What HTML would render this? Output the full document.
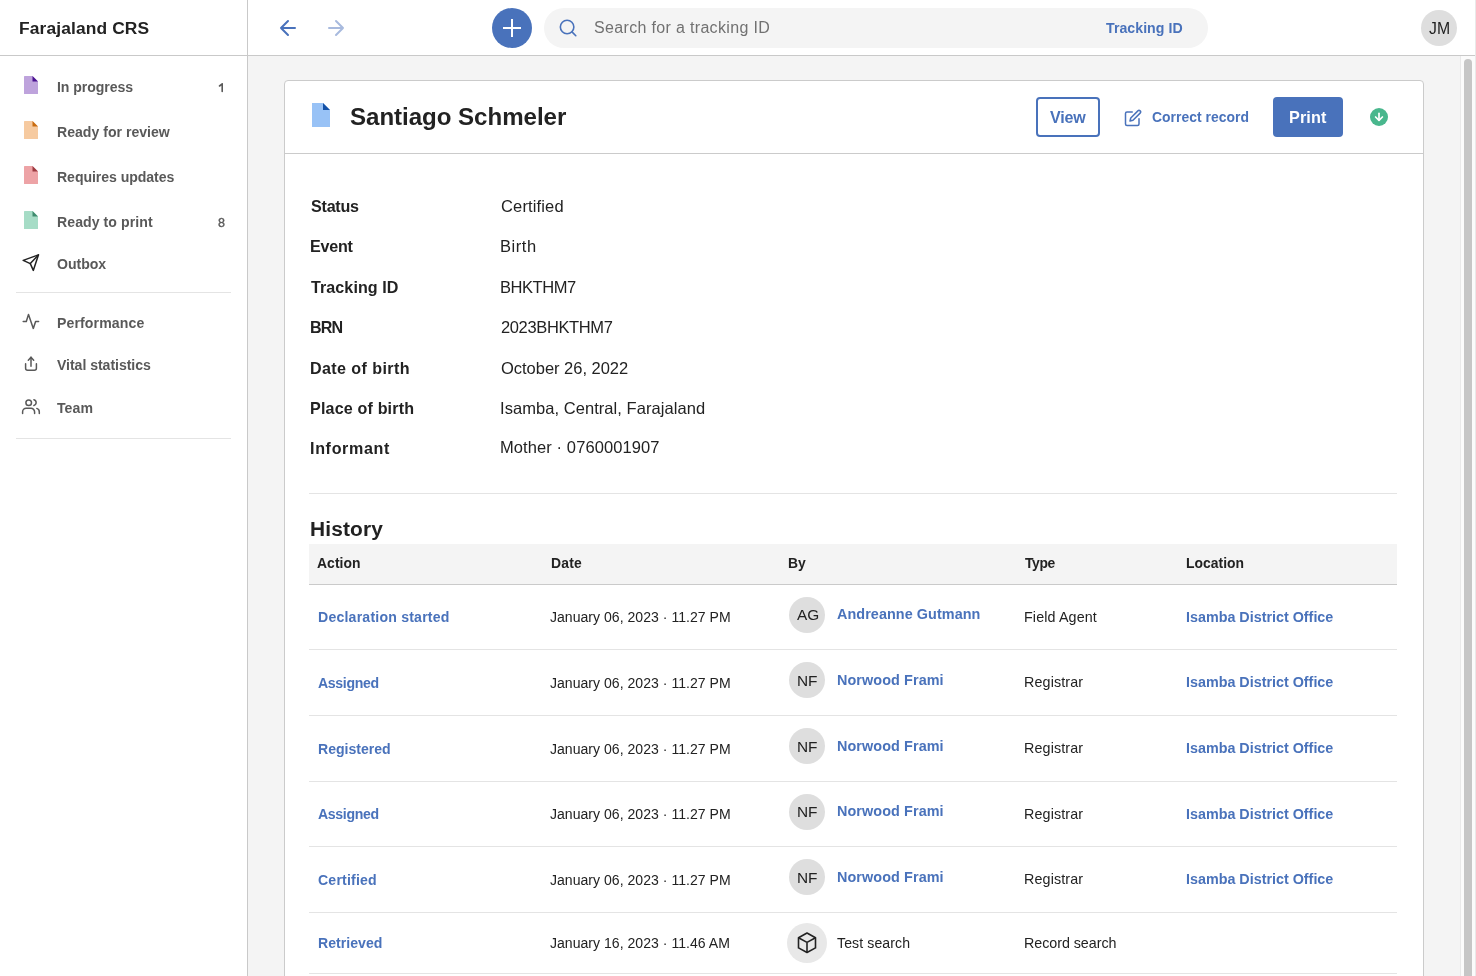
<!DOCTYPE html>
<html><head><meta charset="utf-8"><title>Farajaland CRS</title>
<style>
html,body{margin:0;padding:0;}
body{width:1476px;height:976px;overflow:hidden;position:relative;background:#fff;font-family:"Liberation Sans",sans-serif;}
.t{position:absolute;white-space:nowrap;line-height:1;will-change:transform;}
svg{display:block}
</style></head><body><div style="position:absolute;left:0;top:0;width:1476px;height:976px;overflow:hidden">
<div style="position:absolute;left:248px;top:56px;width:1212px;height:920px;background:#f4f4f4"></div>
<div style="position:absolute;left:284px;top:80px;width:1140px;height:960px;background:#fff;border:1px solid #cbcbcb;border-radius:4px;box-sizing:border-box"></div>
<div style="position:absolute;left:285px;top:153px;width:1138px;height:1px;background:#cbcbcb"></div>
<div style="position:absolute;left:0px;top:0px;width:1476px;height:55px;background:#fff"></div>
<div style="position:absolute;left:0px;top:55px;width:1475px;height:1px;background:#c9c9c9"></div>
<div style="position:absolute;left:0px;top:56px;width:247px;height:920px;background:#fff"></div>
<div style="position:absolute;left:247px;top:0px;width:1px;height:976px;background:#c9c9c9"></div>
<div style="position:absolute;left:1460px;top:56px;width:1px;height:920px;background:#e9e9e9"></div>
<div style="position:absolute;left:1461px;top:56px;width:14px;height:920px;background:#fbfbfb"></div>
<div style="position:absolute;left:1475px;top:0px;width:1px;height:976px;background:#e9e9e9"></div>
<div style="position:absolute;left:1464px;top:59px;width:8px;height:930px;background:#c6c6c6;border-radius:4px"></div>
<div class="t" style="left:19.20px;top:19.91px;font-size:17.4px;font-weight:700;color:#222222;letter-spacing:0.120px;">Farajaland CRS</div>
<svg style="position:absolute;left:24px;top:76px" width="14" height="18" viewBox="0 0 14 18" fill="none"><path d="M0.6 0H8.5L14 5.5V17.4Q14 18 13.4 18H0.6Q0 18 0 17.4V0.6Q0 0 0.6 0Z" fill="#bea3dc"/><path d="M8.5 0L14 5.5H8.5Z" fill="#4b1390"/></svg>
<div class="t" style="left:56.70px;top:80.02px;font-size:14.1px;font-weight:700;color:#595959;letter-spacing:-0.061px;">In progress</div>
<svg style="position:absolute;left:24px;top:121px" width="14" height="18" viewBox="0 0 14 18" fill="none"><path d="M0.6 0H8.5L14 5.5V17.4Q14 18 13.4 18H0.6Q0 18 0 17.4V0.6Q0 0 0.6 0Z" fill="#f6caa0"/><path d="M8.5 0L14 5.5H8.5Z" fill="#c96c10"/></svg>
<div class="t" style="left:56.70px;top:125.02px;font-size:14.1px;font-weight:700;color:#595959;">Ready for review</div>
<svg style="position:absolute;left:24px;top:166px" width="14" height="18" viewBox="0 0 14 18" fill="none"><path d="M0.6 0H8.5L14 5.5V17.4Q14 18 13.4 18H0.6Q0 18 0 17.4V0.6Q0 0 0.6 0Z" fill="#eda3a6"/><path d="M8.5 0L14 5.5H8.5Z" fill="#9c3b40"/></svg>
<div class="t" style="left:56.70px;top:170.01px;font-size:14.1px;font-weight:700;color:#595959;letter-spacing:-0.062px;">Requires updates</div>
<svg style="position:absolute;left:24px;top:211px" width="14" height="18" viewBox="0 0 14 18" fill="none"><path d="M0.6 0H8.5L14 5.5V17.4Q14 18 13.4 18H0.6Q0 18 0 17.4V0.6Q0 0 0.6 0Z" fill="#a6dcc6"/><path d="M8.5 0L14 5.5H8.5Z" fill="#3e8b6e"/></svg>
<div class="t" style="left:56.70px;top:215.01px;font-size:14.1px;font-weight:700;color:#595959;letter-spacing:0.065px;">Ready to print</div>
<svg style="position:absolute;left:214px;top:78px" width="14" height="18" viewBox="0 0 14 18" fill="none"><path d="M8.2 5.9V13.4M8.2 5.9L5.5 8.0" stroke="#595959" stroke-width="1.6" stroke-linecap="round" stroke-linejoin="round"/></svg>
<div class="t" style="left:218.00px;top:217.38px;font-size:12.5px;font-weight:400;color:#595959;-webkit-text-stroke:0.35px #595959">8</div>
<svg style="position:absolute;left:18px;top:250px" width="26" height="26" viewBox="0 0 26 26" fill="none"><g stroke="#222222" stroke-width="1.5" stroke-linejoin="round" stroke-linecap="round"><path d="M20.4 4.9L5.2 10.4L12.3 13.6L15.3 20.4Z"/><path d="M12.3 13.6L20.4 4.9"/></g></svg>
<div class="t" style="left:56.70px;top:257.01px;font-size:14.1px;font-weight:700;color:#595959;letter-spacing:-0.037px;">Outbox</div>
<div style="position:absolute;left:16px;top:292px;width:215px;height:1px;background:#e4e4e4"></div>
<svg style="position:absolute;left:18px;top:308px" width="26" height="26" viewBox="0 0 26 26" fill="none"><path d="M5.2 13.45H8.3L10.5 6.4L15.3 20.4L17.6 13.45H20.6" stroke="#595959" stroke-width="1.5" stroke-linejoin="round" stroke-linecap="round"/></svg>
<div class="t" style="left:56.70px;top:316.01px;font-size:14.1px;font-weight:700;color:#595959;letter-spacing:0.107px;">Performance</div>
<svg style="position:absolute;left:18px;top:350px" width="26" height="26" viewBox="0 0 26 26" fill="none"><g stroke="#595959" stroke-width="1.5" stroke-linejoin="round" stroke-linecap="round"><path d="M7.6 13.7V18.2A2 2 0 0 0 9.6 20.2H16.4A2 2 0 0 0 18.4 18.2V13.7"/><path d="M10.3 10.2L13 7.3L15.7 10.2"/><path d="M13 7.3V16.2"/></g></svg>
<div class="t" style="left:56.70px;top:358.01px;font-size:14.1px;font-weight:700;color:#595959;letter-spacing:-0.046px;">Vital statistics</div>
<svg style="position:absolute;left:18px;top:394px" width="26" height="26" viewBox="0 0 26 26" fill="none"><g stroke="#595959" stroke-width="1.5" stroke-linejoin="round" stroke-linecap="round"><circle cx="10.7" cy="8.7" r="2.8"/><path d="M15.9 5.7A3 3 0 0 1 15.9 11.5"/><path d="M4.6 19.4V17.9A3.6 3.6 0 0 1 8.2 14.3H13A3.6 3.6 0 0 1 16.6 17.9V19.4"/><path d="M18.8 14.4A3.6 3.6 0 0 1 21.3 17.9V19.4"/></g></svg>
<div class="t" style="left:56.70px;top:401.01px;font-size:14.1px;font-weight:700;color:#595959;letter-spacing:0.054px;">Team</div>
<div style="position:absolute;left:16px;top:438px;width:215px;height:1px;background:#e4e4e4"></div>
<svg style="position:absolute;left:276px;top:16px" width="24" height="24" viewBox="0 0 24 24" fill="none"><path d="M19 12H5M12 19L5 12L12 5" stroke="#4972bb" stroke-width="2" stroke-linecap="round" stroke-linejoin="round"/></svg>
<svg style="position:absolute;left:324px;top:16px" width="24" height="24" viewBox="0 0 24 24" fill="none"><path d="M5 12H19M12 5L19 12L12 19" stroke="#a8bade" stroke-width="2" stroke-linecap="round" stroke-linejoin="round"/></svg>
<div style="position:absolute;left:492px;top:8px;width:40px;height:40px;background:#4972bb;border-radius:50%"></div>
<svg style="position:absolute;left:492px;top:8px" width="40" height="40" viewBox="0 0 40 40" fill="none"><path d="M20 11V29M11 20H29" stroke="#fff" stroke-width="2"/></svg>
<div style="position:absolute;left:544px;top:8px;width:664px;height:40px;background:#f4f4f4;border-radius:20px"></div>
<svg style="position:absolute;left:555px;top:15px" width="26" height="26" viewBox="0 0 26 26" fill="none"><g stroke="#4972bb" stroke-width="1.6" stroke-linecap="round"><circle cx="12.1" cy="12" r="6.75"/><path d="M17 16.9L20.8 20.7"/></g></svg>
<div class="t" style="left:593.80px;top:20.00px;font-size:16px;font-weight:400;color:#717171;letter-spacing:0.334px;">Search for a tracking ID</div>
<div class="t" style="left:1106.40px;top:20.97px;font-size:14.15px;font-weight:700;color:#4972bb;letter-spacing:0.039px;">Tracking ID</div>
<div style="position:absolute;left:1421px;top:10px;width:36px;height:36px;background:#dedede;border-radius:50%"></div>
<div class="t" style="left:1428.90px;top:20.57px;font-size:15.8px;font-weight:400;color:#222222;">JM</div>
<svg style="position:absolute;left:312px;top:103px" width="18" height="24" viewBox="0 0 18 24" fill="none"><path d="M0 0H11L18 7V24H0Z" fill="#98c2f6"/><path d="M11 0L18 7H11Z" fill="#1350a6"/></svg>
<div class="t" style="left:349.70px;top:105.22px;font-size:24.1px;font-weight:700;color:#222222;letter-spacing:-0.040px;">Santiago Schmeler</div>
<div style="position:absolute;left:1036px;top:97px;width:64px;height:40px;border:2px solid #4972bb;border-radius:4px;box-sizing:border-box"></div>
<div class="t" style="left:1049.70px;top:108.95px;font-size:16.06px;font-weight:700;color:#4972bb;letter-spacing:-0.165px;">View</div>
<svg style="position:absolute;left:1124px;top:108.5px" width="18" height="18" viewBox="0 0 24 24" fill="none"><g stroke="#4972bb" stroke-width="2" stroke-linecap="round" stroke-linejoin="round"><path d="M11 4H4A2 2 0 0 0 2 6V20A2 2 0 0 0 4 22H18A2 2 0 0 0 20 20V13"/><path d="M18.5 2.5A2.121 2.121 0 0 1 21.5 5.5L12 15L8 16L9 12Z"/></g></svg>
<div class="t" style="left:1151.50px;top:110.98px;font-size:13.91px;font-weight:700;color:#4972bb;letter-spacing:0.030px;">Correct record</div>
<div style="position:absolute;left:1273px;top:97px;width:70px;height:40px;background:#4972bb;border-radius:4px"></div>
<div class="t" style="left:1288.90px;top:109.20px;font-size:16.24px;font-weight:700;color:#ffffff;letter-spacing:0.107px;">Print</div>
<div style="position:absolute;left:1370px;top:108px;width:18px;height:18px;background:#49b78d;border-radius:50%"></div>
<svg style="position:absolute;left:1366px;top:104px" width="26" height="26" viewBox="0 0 26 26" fill="none"><g stroke="#fff" stroke-width="1.7" stroke-linecap="round" stroke-linejoin="round"><path d="M13 9.3V16.2"/><path d="M9.6 13L13 16.4L16.4 13"/></g></svg>
<div class="t" style="left:310.80px;top:198.31px;font-size:16.1px;font-weight:700;color:#222222;letter-spacing:-0.227px;">Status</div>
<div class="t" style="left:500.80px;top:197.97px;font-size:16.5px;font-weight:400;color:#222222;letter-spacing:0.142px;">Certified</div>
<div class="t" style="left:309.80px;top:238.31px;font-size:16.1px;font-weight:700;color:#222222;letter-spacing:-0.242px;">Event</div>
<div class="t" style="left:499.80px;top:237.97px;font-size:16.5px;font-weight:400;color:#222222;letter-spacing:0.562px;">Birth</div>
<div class="t" style="left:310.80px;top:278.92px;font-size:16.1px;font-weight:700;color:#222222;letter-spacing:0.067px;">Tracking ID</div>
<div class="t" style="left:499.80px;top:278.58px;font-size:16.5px;font-weight:400;color:#222222;letter-spacing:-0.444px;">BHKTHM7</div>
<div class="t" style="left:309.80px;top:319.31px;font-size:16.1px;font-weight:700;color:#222222;letter-spacing:-0.872px;">BRN</div>
<div class="t" style="left:500.80px;top:318.98px;font-size:16.5px;font-weight:400;color:#222222;letter-spacing:-0.367px;">2023BHKTHM7</div>
<div class="t" style="left:309.80px;top:360.12px;font-size:16.1px;font-weight:700;color:#222222;letter-spacing:0.397px;">Date of birth</div>
<div class="t" style="left:500.80px;top:359.78px;font-size:16.5px;font-weight:400;color:#222222;letter-spacing:-0.022px;">October 26, 2022</div>
<div class="t" style="left:309.80px;top:400.01px;font-size:16.1px;font-weight:700;color:#222222;letter-spacing:0.160px;">Place of birth</div>
<div class="t" style="left:499.80px;top:399.68px;font-size:16.5px;font-weight:400;color:#222222;letter-spacing:0.057px;">Isamba, Central, Farajaland</div>
<div class="t" style="left:309.80px;top:439.81px;font-size:16.1px;font-weight:700;color:#222222;letter-spacing:0.657px;">Informant</div>
<div class="t" style="left:499.80px;top:439.48px;font-size:16.5px;font-weight:400;color:#222222;letter-spacing:0.094px;">Mother · 0760001907</div>
<div style="position:absolute;left:309px;top:493px;width:1088px;height:1px;background:#e4e4e4"></div>
<div class="t" style="left:309.50px;top:519.44px;font-size:20.9px;font-weight:700;color:#222222;letter-spacing:0.141px;">History</div>
<div style="position:absolute;left:309px;top:544px;width:1088px;height:40px;background:#f4f4f4"></div>
<div style="position:absolute;left:309px;top:584px;width:1088px;height:1px;background:#cacaca"></div>
<div class="t" style="left:317.20px;top:557.18px;font-size:13.9px;font-weight:700;color:#222222;letter-spacing:0.075px;">Action</div>
<div class="t" style="left:550.70px;top:557.18px;font-size:13.9px;font-weight:700;color:#222222;letter-spacing:0.239px;">Date</div>
<div class="t" style="left:787.70px;top:557.18px;font-size:13.9px;font-weight:700;color:#222222;">By</div>
<div class="t" style="left:1024.90px;top:557.18px;font-size:13.9px;font-weight:700;color:#222222;letter-spacing:-0.355px;">Type</div>
<div class="t" style="left:1186.00px;top:557.18px;font-size:13.9px;font-weight:700;color:#222222;letter-spacing:0.030px;">Location</div>
<div class="t" style="left:317.60px;top:610.01px;font-size:14.1px;font-weight:700;color:#4972bb;letter-spacing:0.208px;">Declaration started</div>
<div class="t" style="left:550.00px;top:610.06px;font-size:14.05px;font-weight:400;color:#222222;letter-spacing:0.019px;">January 06, 2023 · 11.27 PM</div>
<div style="position:absolute;left:789px;top:596.5px;width:36px;height:36px;background:#dedede;border-radius:50%"></div>
<div class="t" style="left:797.00px;top:607.41px;font-size:15.4px;font-weight:400;color:#222222;">AG</div>
<div class="t" style="left:837.40px;top:607.06px;font-size:14.4px;font-weight:700;color:#4972bb;letter-spacing:0.067px;">Andreanne Gutmann</div>
<div class="t" style="left:1023.90px;top:609.85px;font-size:14.3px;font-weight:400;color:#222222;letter-spacing:0.125px;">Field Agent</div>
<div class="t" style="left:1186.00px;top:609.82px;font-size:14.33px;font-weight:700;color:#4972bb;">Isamba District Office</div>
<div style="position:absolute;left:309px;top:649px;width:1088px;height:1px;background:#e4e4e4"></div>
<div class="t" style="left:317.60px;top:675.51px;font-size:14.1px;font-weight:700;color:#4972bb;letter-spacing:-0.347px;">Assigned</div>
<div class="t" style="left:550.00px;top:675.56px;font-size:14.05px;font-weight:400;color:#222222;letter-spacing:0.019px;">January 06, 2023 · 11.27 PM</div>
<div style="position:absolute;left:789px;top:662.0px;width:36px;height:36px;background:#dedede;border-radius:50%"></div>
<div class="t" style="left:796.50px;top:672.91px;font-size:15.4px;font-weight:400;color:#222222;">NF</div>
<div class="t" style="left:837.40px;top:672.56px;font-size:14.4px;font-weight:700;color:#4972bb;letter-spacing:0.089px;">Norwood Frami</div>
<div class="t" style="left:1023.90px;top:675.35px;font-size:14.3px;font-weight:400;color:#222222;letter-spacing:0.133px;">Registrar</div>
<div class="t" style="left:1186.00px;top:675.32px;font-size:14.33px;font-weight:700;color:#4972bb;">Isamba District Office</div>
<div style="position:absolute;left:309px;top:715px;width:1088px;height:1px;background:#e4e4e4"></div>
<div class="t" style="left:317.60px;top:741.51px;font-size:14.1px;font-weight:700;color:#4972bb;letter-spacing:-0.015px;">Registered</div>
<div class="t" style="left:550.00px;top:741.56px;font-size:14.05px;font-weight:400;color:#222222;letter-spacing:0.019px;">January 06, 2023 · 11.27 PM</div>
<div style="position:absolute;left:789px;top:728.0px;width:36px;height:36px;background:#dedede;border-radius:50%"></div>
<div class="t" style="left:796.50px;top:738.91px;font-size:15.4px;font-weight:400;color:#222222;">NF</div>
<div class="t" style="left:837.40px;top:738.56px;font-size:14.4px;font-weight:700;color:#4972bb;letter-spacing:0.089px;">Norwood Frami</div>
<div class="t" style="left:1023.90px;top:741.35px;font-size:14.3px;font-weight:400;color:#222222;letter-spacing:0.133px;">Registrar</div>
<div class="t" style="left:1186.00px;top:741.32px;font-size:14.33px;font-weight:700;color:#4972bb;">Isamba District Office</div>
<div style="position:absolute;left:309px;top:781px;width:1088px;height:1px;background:#e4e4e4"></div>
<div class="t" style="left:317.60px;top:807.01px;font-size:14.1px;font-weight:700;color:#4972bb;letter-spacing:-0.347px;">Assigned</div>
<div class="t" style="left:550.00px;top:807.06px;font-size:14.05px;font-weight:400;color:#222222;letter-spacing:0.019px;">January 06, 2023 · 11.27 PM</div>
<div style="position:absolute;left:789px;top:793.5px;width:36px;height:36px;background:#dedede;border-radius:50%"></div>
<div class="t" style="left:796.50px;top:804.41px;font-size:15.4px;font-weight:400;color:#222222;">NF</div>
<div class="t" style="left:837.40px;top:804.06px;font-size:14.4px;font-weight:700;color:#4972bb;letter-spacing:0.089px;">Norwood Frami</div>
<div class="t" style="left:1023.90px;top:806.85px;font-size:14.3px;font-weight:400;color:#222222;letter-spacing:0.133px;">Registrar</div>
<div class="t" style="left:1186.00px;top:806.82px;font-size:14.33px;font-weight:700;color:#4972bb;">Isamba District Office</div>
<div style="position:absolute;left:309px;top:846px;width:1088px;height:1px;background:#e4e4e4"></div>
<div class="t" style="left:317.60px;top:872.51px;font-size:14.1px;font-weight:700;color:#4972bb;letter-spacing:0.180px;">Certified</div>
<div class="t" style="left:550.00px;top:872.56px;font-size:14.05px;font-weight:400;color:#222222;letter-spacing:0.019px;">January 06, 2023 · 11.27 PM</div>
<div style="position:absolute;left:789px;top:859.0px;width:36px;height:36px;background:#dedede;border-radius:50%"></div>
<div class="t" style="left:796.50px;top:869.91px;font-size:15.4px;font-weight:400;color:#222222;">NF</div>
<div class="t" style="left:837.40px;top:869.56px;font-size:14.4px;font-weight:700;color:#4972bb;letter-spacing:0.089px;">Norwood Frami</div>
<div class="t" style="left:1023.90px;top:872.35px;font-size:14.3px;font-weight:400;color:#222222;letter-spacing:0.133px;">Registrar</div>
<div class="t" style="left:1186.00px;top:872.32px;font-size:14.33px;font-weight:700;color:#4972bb;">Isamba District Office</div>
<div style="position:absolute;left:309px;top:912px;width:1088px;height:1px;background:#e4e4e4"></div>
<div class="t" style="left:317.60px;top:936.01px;font-size:14.1px;font-weight:700;color:#4972bb;letter-spacing:0.022px;">Retrieved</div>
<div class="t" style="left:550.00px;top:936.06px;font-size:14.05px;font-weight:400;color:#222222;letter-spacing:0.019px;">January 16, 2023 · 11.46 AM</div>
<div style="position:absolute;left:787px;top:923.0px;width:40px;height:40px;background:#e8e8e8;border-radius:50%"></div>
<svg style="position:absolute;left:787px;top:923.0px" width="40" height="40" viewBox="0 0 40 40" fill="none"><g stroke="#222222" stroke-width="1.6" stroke-linejoin="round"><path d="M20 10L28.5 14.8V24.9L20 29.5L11.5 24.9V14.8Z"/><path d="M11.5 14.8L20 19.4L28.5 14.8M20 19.4V29.5"/></g></svg>
<div class="t" style="left:837.40px;top:936.03px;font-size:14.08px;font-weight:400;color:#222222;letter-spacing:0.104px;">Test search</div>
<div class="t" style="left:1023.90px;top:935.85px;font-size:14.3px;font-weight:400;color:#222222;letter-spacing:-0.043px;">Record search</div>
<div style="position:absolute;left:309px;top:973px;width:1088px;height:1px;background:#e4e4e4"></div>
</div></body></html>
